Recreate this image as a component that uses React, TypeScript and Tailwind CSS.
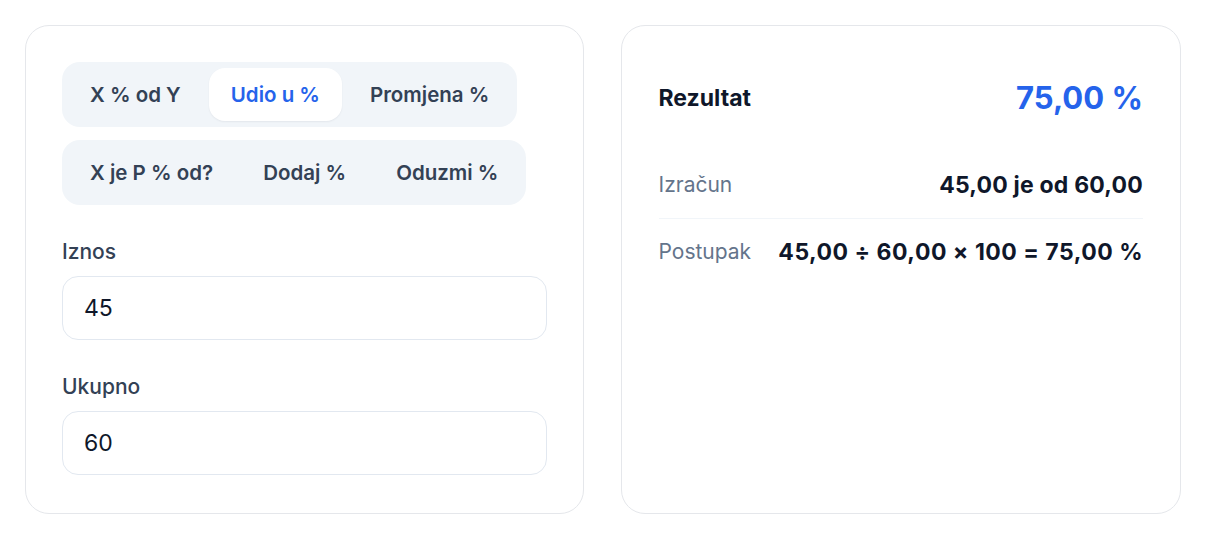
import { useState } from 'react';

const row1 = ['X % od Y', 'Udio u %', 'Promjena %'];
const row2 = ['X je P % od?', 'Dodaj %', 'Oduzmi %'];

function TabGroup({ tabs, active, onPick }: { tabs: string[]; active: string; onPick: (t: string) => void }) {
  return (
    <div className="inline-flex gap-[6px] rounded-[18px] bg-[#f1f5f9] p-[6px]">
      {tabs.map((t) => (
        <button
          key={t}
          onClick={() => onPick(t)}
          className={
            t === active
              ? 'h-[53px] rounded-[16px] bg-white px-[22px] pt-[2px] text-[20.5px] font-semibold text-[#2563eb] shadow-[0_1px_2px_rgba(15,23,42,0.06)]'
              : 'h-[53px] rounded-[16px] px-[22px] pt-[2px] text-[20.5px] font-semibold text-[#334155]'
          }
        >
          {t}
        </button>
      ))}
    </div>
  );
}

function Field({ label, value, onChange }: { label: string; value: string; onChange: (v: string) => void }) {
  return (
    <label className="mt-[32px] flex flex-col">
      <span className="text-[21px] font-medium leading-[30px] text-[#334155]">{label}</span>
      <input
        value={value}
        onChange={(e) => onChange(e.target.value)}
        className="mt-[9px] h-[64px] rounded-[16px] border border-[#e2e8f0] bg-white px-[21px] text-[23px] text-[#0f172a] outline-none"
      />
    </label>
  );
}

export default function App() {
  const [mode, setMode] = useState('Udio u %');
  const [part, setPart] = useState('45');
  const [total, setTotal] = useState('60');

  return (
    <div className="flex gap-[37px] bg-white p-[25px] font-['Inter',sans-serif]">
      <section className="flex flex-1 flex-col rounded-[24px] border border-[#e5e7eb] px-[36px] pt-[36px] pb-[38px]">
        <div className="flex flex-col items-start gap-[13px]">
          <TabGroup tabs={row1} active={mode} onPick={setMode} />
          <TabGroup tabs={row2} active={mode} onPick={setMode} />
        </div>
        <Field label="Iznos" value={part} onChange={setPart} />
        <Field label="Ukupno" value={total} onChange={setTotal} />
      </section>

      <section className="flex flex-1 flex-col rounded-[24px] border border-[#e5e7eb] px-[37px] pt-[36px]">
        <div className="flex h-[72px] items-center justify-between">
          <span className="text-[23px] font-bold text-[#0f172a]">Rezultat</span>
          <span className="text-[31px] font-bold text-[#2563eb]">75,00 %</span>
        </div>
        <div className="mt-[18px] flex items-center justify-between border-b border-[#f1f5f9] py-[18px] leading-[30px]">
          <span className="text-[21px] text-[#64748b]">Izračun</span>
          <span className="text-[23px] font-bold tracking-[0.2px] text-[#0f172a]">45,00 je od 60,00</span>
        </div>
        <div className="flex items-center justify-between py-[18px] leading-[30px]">
          <span className="text-[21px] text-[#64748b]">Postupak</span>
          <span className="text-[23px] font-bold tracking-[0.5px] text-[#0f172a]">45,00 ÷ 60,00 × 100 = 75,00 %</span>
        </div>
      </section>
    </div>
  );
}
